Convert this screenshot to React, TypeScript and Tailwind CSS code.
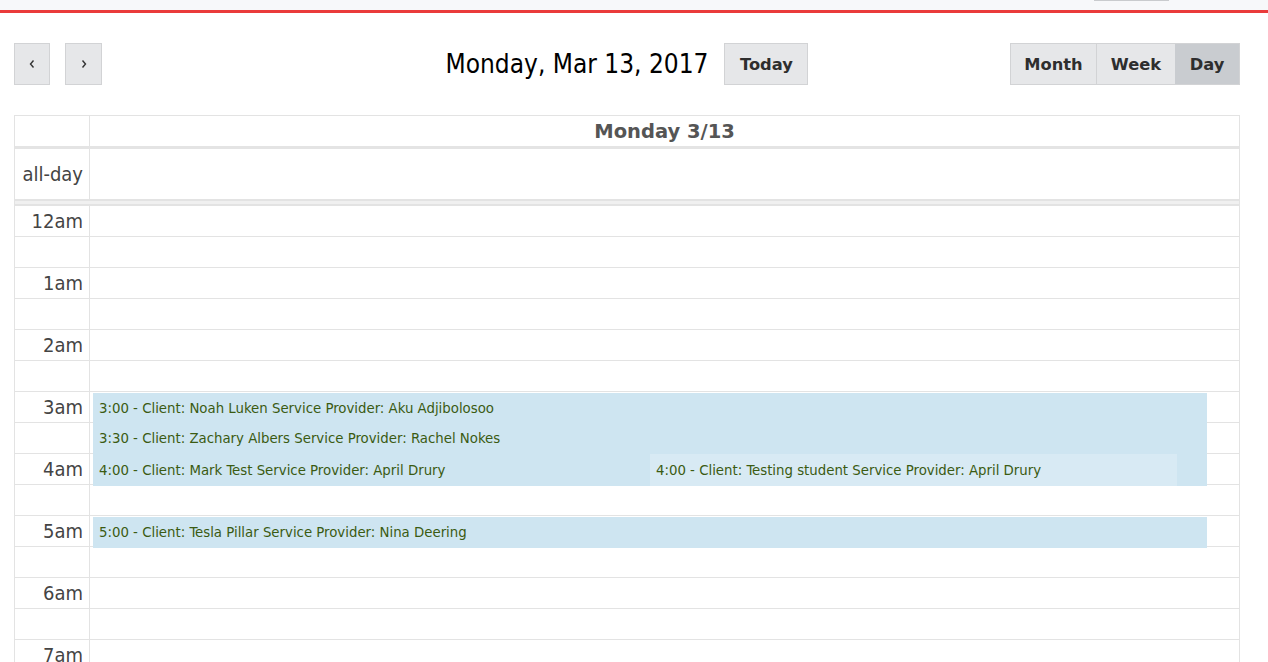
import React from "react";

const FONT = "font-['DejaVu_Sans_Condensed','DejaVu_Sans',sans-serif]";
const BTN = "font-['DejaVu_Sans',sans-serif] text-[16.3px] font-bold text-[#2e2e2e] pt-[3px]";

function Chevron({ dir }: { dir: "left" | "right" }) {
  return (
    <svg width="8" height="12" viewBox="0 0 8 12" fill="none">
      {dir === "left" ? (
        <path d="M5.5 2.5 L2.5 6 L5.5 9.5" stroke="#333" strokeWidth="1.4" />
      ) : (
        <path d="M2.5 2.5 L5.5 6 L2.5 9.5" stroke="#333" strokeWidth="1.4" />
      )}
    </svg>
  );
}

const hours = ["12am", "1am", "2am", "3am", "4am", "5am", "6am", "7am", "8am"];

export default function App() {
  const rows: { label: string | null }[] = [];
  hours.forEach((h) => {
    rows.push({ label: h });
    rows.push({ label: null });
  });

  return (
    <div className={`w-[1268px] h-[662px] overflow-hidden bg-white ${FONT}`}>
      <div className="relative h-[10px] bg-[#f7f8fa]">
        <div className="absolute left-[1094px] top-0 h-[1px] w-[75px] bg-[#c9cbce]" />
      </div>
      <div className="h-[3px] bg-[#ea3b3b]" />

      <div className="pl-[14px] pr-[28px] pt-[30px]">
        {/* toolbar */}
        <div className="grid h-[42px] grid-cols-[1fr_auto_1fr] items-center">
          <div className="flex gap-[15px]">
            <button className="flex h-[42px] w-[36px] items-center justify-center border border-[#d2d3d5] bg-[#e6e7e9]">
              <Chevron dir="left" />
            </button>
            <button className="flex h-[42px] w-[37px] items-center justify-center border border-[#d2d3d5] bg-[#e6e7e9]">
              <Chevron dir="right" />
            </button>
          </div>
          <div className="flex items-center gap-[16px]">
            <h2 className="text-[26px] leading-none text-black">Monday, Mar 13, 2017</h2>
            <button className={`flex h-[42px] w-[84px] items-center justify-center border border-[#d2d3d5] bg-[#e6e7e9] ${BTN}`}>
              Today
            </button>
          </div>
          <div className="flex justify-end">
            <div className="flex h-[42px] border border-[#d2d3d5]">
              <button className={`flex w-[86px] items-center justify-center border-r border-[#d2d3d5] bg-[#e6e7e9] ${BTN}`}>
                Month
              </button>
              <button className={`flex w-[78px] items-center justify-center bg-[#e6e7e9] ${BTN}`}>
                Week
              </button>
              <button className={`flex w-[64px] items-center justify-center bg-[#c9ccd0] ${BTN}`}>
                Day
              </button>
            </div>
          </div>
        </div>

        {/* calendar */}
        <div className="mt-[30px] border border-[#e3e3e3]">
          {/* header */}
          <div className="flex h-[30px]">
            <div className="w-[75px] border-r border-[#e3e3e3]" />
            <div className="flex flex-1 items-center justify-center pt-[1px] font-['DejaVu_Sans',sans-serif] text-[19.5px] font-bold text-[#555]">
              Monday 3/13
            </div>
          </div>
          <div className="h-[3px] bg-[#e4e4e4]" />
          {/* all-day */}
          <div className="flex h-[50px]">
            <div className="flex w-[75px] items-center justify-end border-r border-[#e3e3e3] pr-[6px] text-[20px] text-[#444]">
              all-day
            </div>
            <div className="flex-1" />
          </div>
          <div className="h-[7px] border-y-2 border-[#e3e3e3] bg-[#f0f0f0]" />
          {/* slots */}
          <div className="flex">
            <div className="w-[75px] border-r border-[#e3e3e3]">
              {rows.map((r, i) => (
                <div
                  key={i}
                  className="h-[31px] border-b border-[#e3e3e3] pr-[6px] pt-[3px] text-right text-[20px] leading-6 text-[#444]"
                >
                  {r.label}
                </div>
              ))}
            </div>
            <div className="relative flex-1">
              {rows.map((_, i) => (
                <div key={i} className="h-[31px] border-b border-[#e3e3e3]" />
              ))}
              <div className="absolute left-[3px] top-[187px] w-[1114px] text-[14.8px] text-[#3b5b12]">
                <div className="flex h-[30px] items-center bg-[#cee5f1] pl-[6px]">
                  3:00 - Client: Noah Luken Service Provider: Aku Adjibolosoo
                </div>
                <div className="flex h-[31px] items-center bg-[#cee5f1] pl-[6px]">
                  3:30 - Client: Zachary Albers Service Provider: Rachel Nokes
                </div>
                <div className="flex h-[32px] items-center bg-[#cee5f1] pl-[6px]">
                  4:00 - Client: Mark Test Service Provider: April Drury
                </div>
              </div>
              <div className="absolute left-[560px] top-[248px] flex h-[32px] w-[527px] items-center bg-[#d8eaf4] pl-[6px] text-[14.8px] text-[#3b5b12]">
                4:00 - Client: Testing student Service Provider: April Drury
              </div>
              <div className="absolute left-[3px] top-[311px] flex h-[31px] w-[1114px] items-center bg-[#cee5f1] pl-[6px] text-[14.8px] text-[#3b5b12]">
                5:00 - Client: Tesla Pillar Service Provider: Nina Deering
              </div>
            </div>
          </div>
        </div>
      </div>
    </div>
  );
}
